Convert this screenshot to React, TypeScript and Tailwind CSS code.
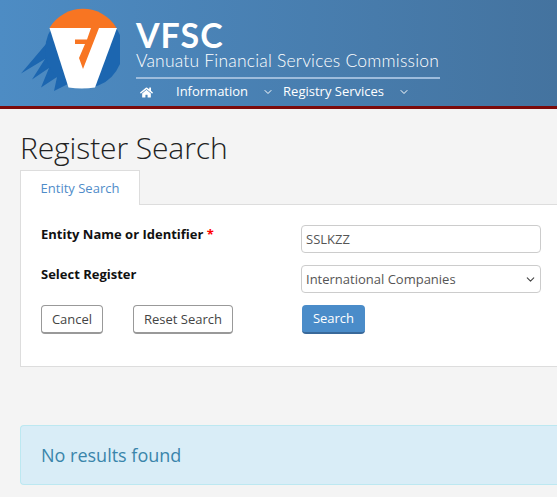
import { ChevronDown } from "lucide-react";
import { FaHome } from "react-icons/fa";

function Logo() {
    return (
        <svg width="120" height="92" viewBox="0 0 120 92" className="shrink-0">
            {/* streaks */}
            <path d="M46 44 L21 73.5 L45 59 L32 79.5 L49 68 L41 87.5 L57 77 L54 91 L68 84 L60 50 Z" fill="#1c66b0" />
            <circle cx="84" cy="49.5" r="38.8" fill="#1c66b0" />
            {/* orange cap */}
            <path d="M49.5 28 A38.8 38.8 0 0 1 116.5 28 Z" fill="#f87522" />
            {/* white V */}
            <path d="M49.5 28 L117 28 L95 87.5 Q82 89.5 68.5 87.5 Z" fill="#ffffff" />
            {/* orange F */}
            <path d="M91 28 L99 28 L83 69 L79 58 L85 44 L75 44 L75 39.5 L87 39.5 Z" fill="#f87522" />
        </svg>
    );
}

export default function App() {
    return (
        <div className="h-[497px] overflow-hidden bg-[#f4f4f4] font-['Open_Sans',sans-serif] text-[13px] text-[#333]">
            <header className="h-[109px] border-b-[3px] border-[#7b0a0a] bg-gradient-to-r from-[#4d8cc4] to-[#44739f] flex">
                <Logo />
                <div className="ml-[16px] w-[304px] text-white">
                    <div className="font-['Lato',sans-serif] font-bold text-[34px] leading-[32px] pt-[19px] tracking-[1px]">VFSC</div>
                    <div className="font-['Lato',sans-serif] font-light text-[17.5px] leading-[20px] whitespace-nowrap tracking-[0.2px] border-b-2 border-[#9dbcdc] h-[28px]">
                        Vanuatu Financial Services Commission
                    </div>
                    <nav className="flex items-center h-[26px] text-[13px] font-normal">
                        <FaHome className="ml-[4px] text-[13px]" />
                        <span className="ml-[23px]">Information</span>
                        <ChevronDown size={12} strokeWidth={2} className="ml-[14px]" />
                        <span className="ml-[9px]">Registry Services</span>
                        <ChevronDown size={12} strokeWidth={2} className="ml-[14px]" />
                    </nav>
                </div>
            </header>

            <main className="pl-[20px]">
                <h1 className="text-[30px] leading-[40px] font-light text-[#222] mt-[19px] tracking-[-0.1px]">Register Search</h1>

                <div className="flex mt-[2px] relative z-10">
                    <div className="w-[120px] h-[35px] pt-[1px] bg-white border border-[#dddddd] border-b-0 flex items-center justify-center text-[#4f8cc9] text-[13px]">
                        Entity Search
                    </div>
                </div>

                <section className="h-[163px] mt-[-1px] bg-white border border-[#dddddd] border-r-0 pl-[20px] pt-[20px]">
                    <div className="flex h-[28px]">
                        <label className="w-[260px] font-bold text-[#111] text-[13px] leading-[18px]">
                            Entity Name or Identifier <span className="text-[#ff0000]">*</span>
                        </label>
                        <div className="w-[240px] h-[28px] pt-[1px] border border-[#cccccc] rounded-[4px] pl-[4px] flex items-center text-[#555] text-[13px]">
                            SSLKZZ
                        </div>
                    </div>
                    <div className="flex h-[28px] mt-[12px]">
                        <label className="w-[260px] font-bold text-[#111] text-[13px] leading-[18px]">Select Register</label>
                        <div className="w-[240px] h-[28px] pt-[1px] border border-[#cccccc] rounded-[4px] pl-[4px] pr-[3px] flex items-center justify-between text-[#555] text-[13px]">
                            International Companies
                            <ChevronDown size={13} strokeWidth={2} className="text-[#444]" />
                        </div>
                    </div>
                    <div className="flex mt-[12px]">
                        <button className="w-[62px] h-[29px] pt-[1px] bg-white border border-[#999] border-b-[2px] rounded-[4px] text-[#444] text-[13px]">Cancel</button>
                        <button className="ml-[30px] w-[100px] h-[29px] pt-[1px] bg-white border border-[#999] border-b-[2px] rounded-[4px] text-[#444] text-[13px]">Reset Search</button>
                        <button className="ml-[69px] w-[63px] h-[29px] bg-[#4a8cc9] border-b-[2px] border-[#39699a] rounded-[4px] text-white text-[13px]">Search</button>
                    </div>
                </section>

                <div className="mt-[58px] h-[60px] bg-[#d9edf7] border border-[#bce8f1] border-r-0 rounded-l-[4px] pl-[20px] flex items-center text-[#3a85ab] text-[18px]">
                    No results found
                </div>
            </main>
        </div>
    );
}
